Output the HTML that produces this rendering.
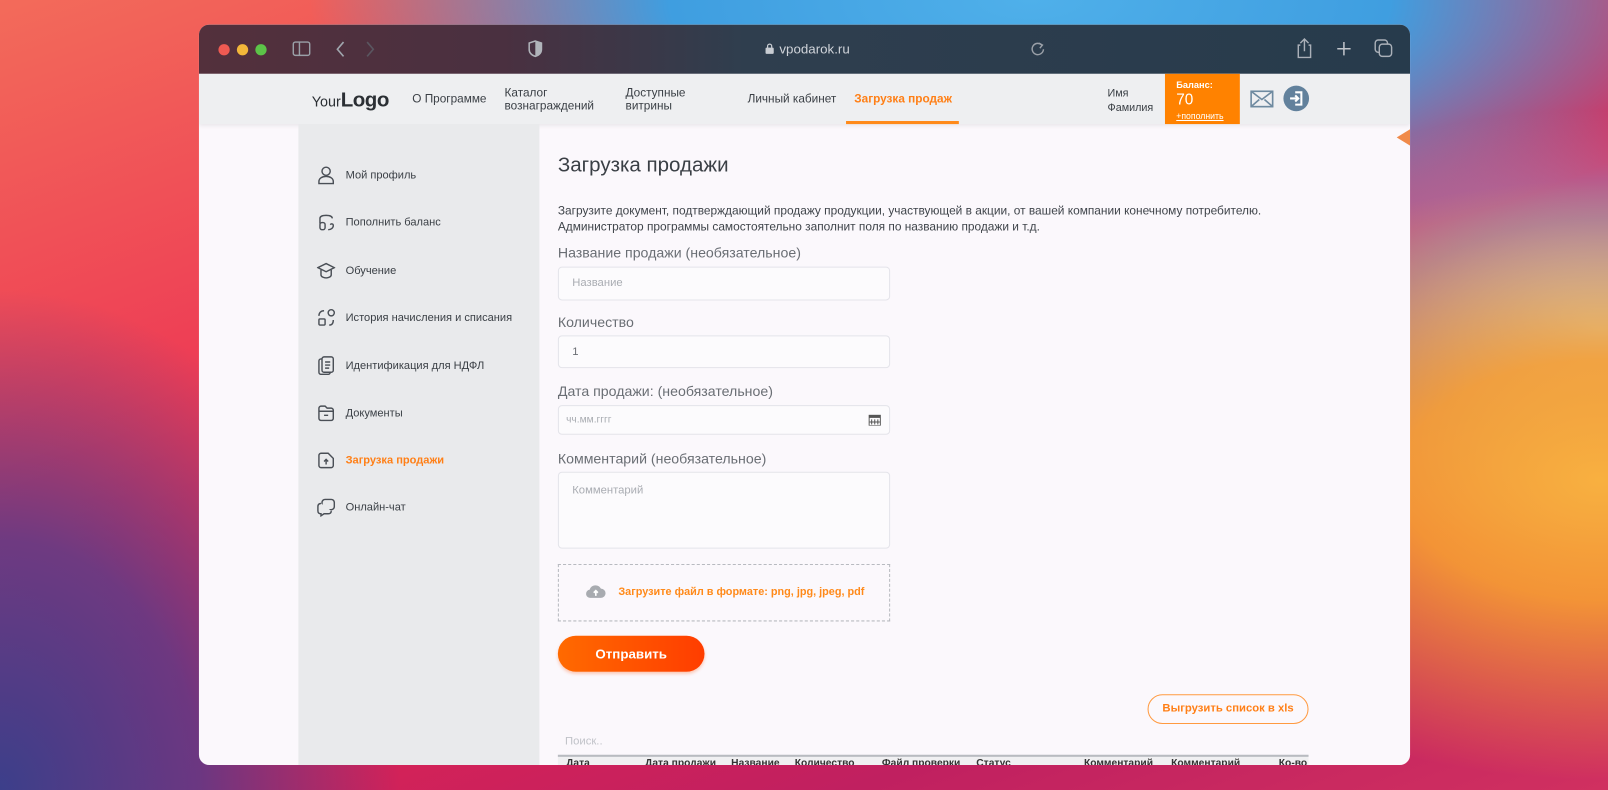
<!DOCTYPE html>
<html><head><meta charset="utf-8"><style>
*{margin:0;padding:0;box-sizing:border-box}
body{width:1608px;height:790px;overflow:hidden;position:relative;font-family:"Liberation Sans","DejaVu Sans",sans-serif;
background:
radial-gradient(ellipse 500px 300px at 1600px 480px,#f8b040 0%,rgba(248,160,50,.9) 40%,rgba(248,140,50,0) 100%),
radial-gradient(ellipse 420px 220px at 1600px 330px,#b8d8f0 0%,rgba(120,180,230,.6) 50%,rgba(100,170,230,0) 100%),
radial-gradient(ellipse 720px 270px at 1030px 0px,#4fb0ea 0%,#3f9ee0 50%,rgba(60,150,220,0) 100%),
radial-gradient(ellipse 400px 500px at 0px 790px,#3c3f8a 0%,rgba(80,60,140,.8) 50%,rgba(100,60,140,0) 100%),
linear-gradient(160deg,#f36b5a 0%,#ee3f55 30%,#e22352 55%,#c02060 80%,#d03060 100%);}
.wrap{position:absolute;left:0;top:0;width:1568px;height:770px;transform:scale(1.0255);transform-origin:0 0}
.win{position:absolute;left:194px;top:24px;width:1181px;height:722px;border-radius:10px;overflow:hidden;background:#fbf8fc}
.tb{position:absolute;left:0;top:0;width:100%;height:48px;background:linear-gradient(90deg,#53303c 0%,#4a3040 25%,#2f3e4e 45%,#273b4c 100%)}
.dot{position:absolute;top:19px;width:11px;height:11px;border-radius:50%}
.nav{position:absolute;left:0;top:48px;width:100%;height:49px;background:#eeeff1;box-shadow:0 2px 4px rgba(0,0,0,.08)}
.nav .t{position:absolute;font-size:11.5px;color:#3a3f45;line-height:13px}
.side{position:absolute;left:97px;top:97px;width:235px;height:625px;background:#e9eaec}
.si{position:absolute;left:18px;font-size:10.8px;color:#3a3f45;display:flex;align-items:center}
.si svg{margin-right:10px}
.c{position:absolute;color:#3f444a}
.inp{position:absolute;left:350px;width:324px;background:#fcfbfd;border:1px solid #e4e4ea;border-radius:4px;font-size:11px;color:#a9acb2;padding-left:13px}
.lbl{position:absolute;left:350px;font-size:13.8px;color:#6a6e74}
</style></head><body>
<div class="wrap">
<div class="win">
<div class="tb">
<div class="dot" style="left:19px;background:#ee5a52"></div>
<div class="dot" style="left:37px;background:#f3b73a"></div>
<div class="dot" style="left:55px;background:#5cc448"></div>
<svg style="position:absolute;left:91px;top:16px" width="18" height="15"><rect x="1" y="1" width="16" height="13" rx="2" fill="none" stroke="#9aa0a8" stroke-width="1.4"/><line x1="7" y1="1" x2="7" y2="14" stroke="#9aa0a8" stroke-width="1.4"/></svg>
<svg style="position:absolute;left:133px;top:16px" width="10" height="16"><path d="M8 1L2 8l6 7" fill="none" stroke="#a0a6ae" stroke-width="1.6"/></svg>
<svg style="position:absolute;left:162px;top:16px" width="10" height="16"><path d="M2 1l6 7-6 7" fill="none" stroke="#5a5660" stroke-width="1.6"/></svg>
<svg style="position:absolute;left:321px;top:15px" width="14" height="17"><path d="M7 1L1 3v6c0 4 3 6 6 7 3-1 6-3 6-7V3z" fill="none" stroke="#b0b4ba" stroke-width="1.5"/><path d="M7 1v15c3-1 6-3 6-7V3z" fill="#b0b4ba"/></svg>
<svg style="position:absolute;left:552px;top:18px" width="9" height="11"><rect x="0.5" y="4.5" width="8" height="6" rx="1" fill="#c8ccd2"/><path d="M2.5 5V3a2 2 0 0 1 4 0v2" fill="none" stroke="#c8ccd2" stroke-width="1.2"/></svg>
<div style="position:absolute;left:566px;top:16px;font-size:13px;color:#d0d4da">vpodarok.ru</div>
<svg style="position:absolute;left:811px;top:16px" width="14" height="15"><path d="M11 4A5.5 5.5 0 1 0 12.5 8" fill="none" stroke="#9aa0a8" stroke-width="1.4"/><path d="M8 2l3.5 2L9 7" fill="none" stroke="#9aa0a8" stroke-width="1.4"/></svg>
<svg style="position:absolute;left:1070px;top:12px" width="16" height="22"><path d="M4 8H2v12h12V8h-2M8 14V2M4 6l4-4 4 4" fill="none" stroke="#aab0b8" stroke-width="1.4"/></svg>
<svg style="position:absolute;left:1109px;top:16px" width="15" height="15"><path d="M7.5 1v13M1 7.5h13" stroke="#c0c4ca" stroke-width="1.5"/></svg>
<svg style="position:absolute;left:1146px;top:14px" width="18" height="18"><rect x="1" y="1" width="12" height="12" rx="3" fill="none" stroke="#aab0b8" stroke-width="1.4"/><rect x="5" y="5" width="12" height="12" rx="3" fill="#273b4c" stroke="#aab0b8" stroke-width="1.4"/></svg>
</div>
<div class="nav">
<div style="position:absolute;left:110px;top:15px;color:#2b2f34"><span style="font-size:14px">Your</span><span style="font-size:20px;font-weight:bold;letter-spacing:-0.5px">Logo</span></div>
<div class="t" style="left:208px;top:19px">О Программе</div>
<div class="t" style="left:298px;top:13px">Каталог<br>вознаграждений</div>
<div class="t" style="left:416px;top:13px">Доступные<br>витрины</div>
<div class="t" style="left:535px;top:19px">Личный кабинет</div>
<div class="t" style="left:639px;top:19px;color:#ff7f16;font-weight:bold">Загрузка продаж</div>
<div style="position:absolute;left:631px;top:46px;width:110px;height:3px;background:#ff8a1a"></div>
<div class="t" style="left:886px;top:12px;font-size:10.5px;line-height:14px">Имя<br>Фамилия</div>
<div style="position:absolute;left:942px;top:0;width:73px;height:49px;background:#ff8200;color:#fff">
<div style="position:absolute;left:11px;top:6px;font-size:9px;font-weight:bold">Баланс:</div>
<div style="position:absolute;left:11px;top:17px;font-size:15px">70</div>
<div style="position:absolute;left:11px;top:36px;font-size:8.5px;text-decoration:underline">+пополнить</div>
</div>
<svg style="position:absolute;left:1025px;top:16px" width="23" height="17"><rect x="1" y="1" width="21" height="15" fill="#eeeff1" stroke="#6e8aa0" stroke-width="1.6"/><path d="M1 1l10.5 8L22 1M1 16l8-7M22 16l-8-7" fill="none" stroke="#6e8aa0" stroke-width="1.6"/></svg>
<svg style="position:absolute;left:1057px;top:11px" width="26" height="26"><circle cx="13" cy="13" r="12.5" fill="#62819c"/><path d="M12 7h6v12h-6" fill="none" stroke="#fff" stroke-width="2"/><path d="M7 13h8M12 10l3 3-3 3" fill="none" stroke="#fff" stroke-width="2"/></svg>
</div>
<div style="position:absolute;left:1168px;top:102px;width:0;height:0;border-top:8px solid transparent;border-bottom:8px solid transparent;border-right:13px solid #f08a4a"></div>
<div class="side">
<div class="si" style="top:41px"><svg width="18" height="18" fill="none" stroke="#4a4f56" stroke-width="1.4"><circle cx="9" cy="5" r="4"/><path d="M2 17v-2c0-3 3-5 7-5s7 2 7 5v2z"/></svg>Мой профиль</div>
<div class="si" style="top:87px"><svg width="18" height="18" fill="none" stroke="#4a4f56" stroke-width="1.4"><path d="M3 10V5c0-2 2-3 6-3s6 1 6 3"/><rect x="3" y="9" width="5" height="7" rx="2"/><path d="M11 16c3 0 5-2 5-4s-2-2-3-1"/></svg>Пополнить баланс</div>
<div class="si" style="top:134px"><svg width="18" height="18" fill="none" stroke="#4a4f56" stroke-width="1.4"><path d="M9 2l8 4-8 4-8-4z"/><path d="M4 8v5c0 2 3 3 5 3s5-1 5-3V8"/></svg>Обучение</div>
<div class="si" style="top:180px"><svg width="18" height="18" fill="none" stroke="#4a4f56" stroke-width="1.4"><path d="M2 7c0-3 2-5 5-5"/><circle cx="14" cy="4" r="3"/><rect x="2" y="10" width="6" height="6" rx="1"/><path d="M12 16c3 0 4-2 4-5"/></svg>История начисления и списания</div>
<div class="si" style="top:226px"><svg width="18" height="19" fill="none" stroke="#4a4f56" stroke-width="1.4"><rect x="2" y="3" width="11" height="15" rx="2"/><rect x="5" y="1" width="11" height="15" rx="2" fill="#e9eaec"/><path d="M8 6h5M8 9h5M8 12h4"/></svg>Идентификация для НДФЛ</div>
<div class="si" style="top:273px"><svg width="18" height="18" fill="none" stroke="#4a4f56" stroke-width="1.4"><path d="M2 4c0-1 1-2 2-2h4l2 2h4c1 0 2 1 2 2v8c0 1-1 2-2 2H4c-1 0-2-1-2-2z"/><path d="M2 7h14M7 11h4"/></svg>Документы</div>
<div class="si" style="top:319px;color:#ff7f16;font-weight:bold"><svg width="18" height="18" fill="none" stroke="#4a4f56" stroke-width="1.4"><path d="M4 2h7l5 5v7c0 1-1 2-2 2H4c-1 0-2-1-2-2V4c0-1 1-2 2-2z"/><path d="M9 13V8M7 10l2-2 2 2"/></svg>Загрузка продажи</div>
<div class="si" style="top:365px"><svg width="18" height="18" fill="none" stroke="#4a4f56" stroke-width="1.4"><rect x="5" y="1" width="12" height="10" rx="3"/><path d="M4 5c-2 0-3 1-3 3v4c0 2 1 3 3 3v2l3-2h4c2 0 3-1 3-3" fill="#e9eaec"/></svg>Онлайн-чат</div>
</div>
<div class="c" style="left:350px;top:126px;font-size:20px;color:#3a3f45">Загрузка продажи</div>
<div class="c" style="left:350px;top:174px;font-size:11.6px;line-height:16px;color:#3f444a;white-space:nowrap">Загрузите документ, подтверждающий продажу продукции, участвующей в акции, от вашей компании конечному потребителю.<br>Администратор программы самостоятельно заполнит поля по названию продажи и т.д.</div>
<div class="lbl" style="top:215px">Название продажи (необязательное)</div>
<div class="inp" style="top:236px;height:33px;line-height:31px">Название</div>
<div class="lbl" style="top:283px">Количество</div>
<div class="inp" style="top:303px;height:32px;line-height:30px;color:#6a6e74">1</div>
<div class="lbl" style="top:350px">Дата продажи: (необязательное)</div>
<div class="inp" style="top:371px;height:29px;line-height:27px;padding-left:7px;font-size:10px">чч.мм.гггг
<svg style="position:absolute;right:8px;top:8px" width="12" height="11"><rect x="0.5" y="1" width="11" height="10" fill="none" stroke="#555" stroke-width="1"/><rect x="0.5" y="1" width="11" height="2.5" fill="#555"/><path d="M3 5v5M6 5v5M9 5v5M1 7.5h10" stroke="#555" stroke-width="1"/></svg></div>
<div class="lbl" style="top:416px">Комментарий (необязательное)</div>
<div class="inp" style="top:436px;height:75px;padding-top:11px">Комментарий</div>
<div style="position:absolute;left:350px;top:526px;width:324px;height:56px;border:1px dashed #b8bac0">
<svg style="position:absolute;left:26px;top:19px" width="20" height="14"><path d="M5 13a4 4 0 0 1-1-8 6 6 0 0 1 11-1 4.5 4.5 0 0 1 0 9z" fill="#a8abb0"/><path d="M10 11V6M8 8l2-2 2 2" fill="none" stroke="#fff" stroke-width="1.6"/></svg>
<div style="position:absolute;left:58px;top:20px;font-size:10.6px;font-weight:bold;color:#ff8a1a">Загрузите файл в формате: png, jpg, jpeg, pdf</div>
</div>
<div style="position:absolute;left:350px;top:596px;width:143px;height:35px;border-radius:18px;background:linear-gradient(90deg,#ff6a00,#ff3d00);color:#fff;font-size:13px;font-weight:bold;text-align:center;line-height:35px;box-shadow:0 2px 3px rgba(255,80,0,.3)">Отправить</div>
<div style="position:absolute;left:925px;top:653px;width:157px;height:29px;border:1.5px solid #ff9a40;border-radius:15px;color:#ff7f16;font-size:11px;font-weight:bold;text-align:center;line-height:26px">Выгрузить список в xls</div>
<div style="position:absolute;left:357px;top:693px;font-size:11px;color:#c0c2c8">Поиск..</div>
<div style="position:absolute;left:350px;top:712px;width:732px;height:12px;border-top:2px solid #b8bbc0;background:#f0f0f2;font-size:10px;font-weight:bold;color:#333;line-height:14px;white-space:nowrap">
<span style="position:absolute;left:8px">Дата</span><span style="position:absolute;left:85px">Дата продажи</span><span style="position:absolute;left:169px">Название</span><span style="position:absolute;left:231px">Количество</span><span style="position:absolute;left:316px">Файл проверки</span><span style="position:absolute;left:408px">Статус</span><span style="position:absolute;left:513px">Комментарий</span><span style="position:absolute;left:598px">Комментарий</span><span style="position:absolute;left:703px">Ко-во</span>
</div>
</div>
</div>
</body></html>
